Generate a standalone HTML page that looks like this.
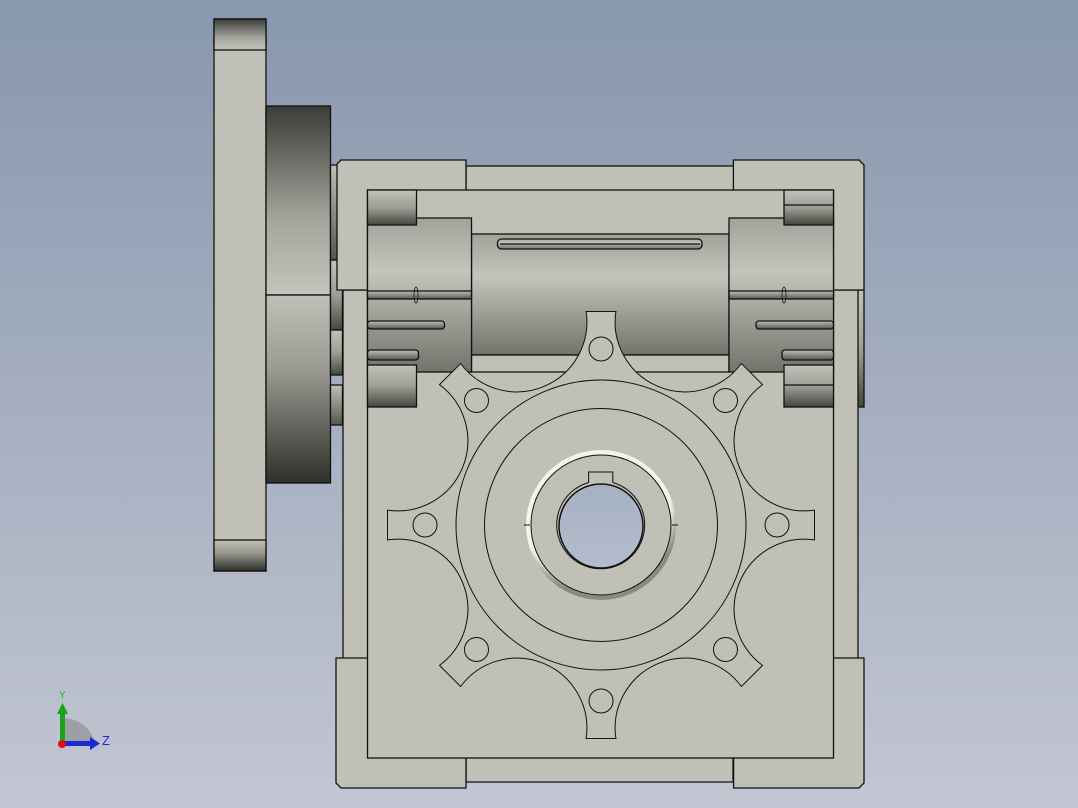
<!DOCTYPE html>
<html><head><meta charset="utf-8"><style>
html,body{margin:0;padding:0;width:1078px;height:808px;overflow:hidden}
svg{display:block}
</style></head><body>
<svg width="1078" height="808" viewBox="0 0 1078 808" xmlns="http://www.w3.org/2000/svg">
<defs>
<linearGradient id="bg" x1="0" y1="0" x2="0" y2="1"><stop offset="0" stop-color="#8797ad"/><stop offset="1" stop-color="#c3c6d3"/></linearGradient>
<linearGradient id="dDown" x1="0" y1="0" x2="0" y2="1"><stop offset="0" stop-color="#c0c0b8"/><stop offset="0.4" stop-color="#9a9a92"/><stop offset="1" stop-color="#2e2f2a"/></linearGradient>
<linearGradient id="dUp" x1="0" y1="0" x2="0" y2="1"><stop offset="0" stop-color="#3c3d38"/><stop offset="0.6" stop-color="#a5a59d"/><stop offset="1" stop-color="#c4c4bc"/></linearGradient>
<linearGradient id="cyl" x1="0" y1="0" x2="0" y2="1"><stop offset="0" stop-color="#a2a29a"/><stop offset="0.35" stop-color="#c4c4bc"/><stop offset="1" stop-color="#72736b"/></linearGradient>
<linearGradient id="blk" x1="0" y1="0" x2="0" y2="1"><stop offset="0" stop-color="#c2c2ba"/><stop offset="0.5" stop-color="#9e9e96"/><stop offset="1" stop-color="#45463f"/></linearGradient>
<linearGradient id="stub" x1="0" y1="0" x2="0" y2="1"><stop offset="0" stop-color="#c0c0b8"/><stop offset="1" stop-color="#55564f"/></linearGradient>
<radialGradient id="ring" cx="0.45" cy="0.35" r="0.6"><stop offset="0.85" stop-color="#f4f4ee"/><stop offset="1" stop-color="#8a8a82"/></radialGradient>
<linearGradient id="hole" x1="0" y1="0" x2="0" y2="1"><stop offset="0" stop-color="#a6b1c4"/><stop offset="1" stop-color="#b3bccb"/></linearGradient>
</defs>
<rect width="1078" height="808" fill="url(#bg)"/>
<g stroke="#111" stroke-width="1.3" fill="#c0c0b7">
<rect x="214" y="19" width="52" height="552"/>
<rect x="214" y="19" width="52" height="31" fill="url(#dUp)"/>
<rect x="214" y="540" width="52" height="31" fill="url(#dDown)"/>
<rect x="266" y="106" width="64.5" height="189" fill="url(#dUp)"/>
<rect x="266" y="295" width="64.5" height="188" fill="url(#dDown)"/>
<rect x="330.5" y="165" width="12" height="95" fill="url(#stub)"/>
<rect x="330.5" y="260" width="12" height="70" fill="url(#blk)"/>
<rect x="330.5" y="330" width="12" height="45" fill="url(#blk)"/>
<rect x="330.5" y="385" width="12" height="40" fill="url(#stub)"/>
<rect x="834" y="290" width="30" height="117" fill="url(#blk)"/>
<rect x="343" y="290" width="515" height="370"/>
<path d="M466 782 L733 782 L733 660 L466 660 Z"/>
<path d="M336 658 L466 658 L466 788 L341 788 L336 783 Z"/>
<path d="M864 658 L733.6 658 L733.6 788 L859 788 L864 783 Z"/>
<rect x="466" y="166" width="268" height="40"/>
<path d="M341 160 L466 160 L466 290 L337 290 L337 164 Z"/>
<path d="M733.4 160 L859 160 L864 165 L864 290 L733.4 290 Z"/>
<rect x="367.5" y="190" width="466" height="568"/>
<rect x="471.5" y="234" width="257.5" height="121" fill="url(#cyl)"/>
<rect x="471.5" y="355" width="257.5" height="17" fill="#c0c0b7"/>
<rect x="497.5" y="239" width="204.5" height="10" rx="4" fill="url(#cyl)"/>
<line x1="500" y1="244" x2="700" y2="244"/>
<rect x="367.5" y="218" width="104" height="154" fill="url(#cyl)"/>
<rect x="729" y="218" width="104.5" height="154" fill="url(#cyl)"/>
<rect x="367.5" y="291" width="104" height="8" fill="url(#stub)"/>
<rect x="729" y="291" width="104.5" height="8" fill="url(#stub)"/>
<rect x="367.5" y="321" width="77" height="8" rx="3" fill="url(#stub)"/>
<rect x="756" y="321" width="77.5" height="8" rx="3" fill="url(#stub)"/>
<rect x="367.5" y="350" width="51" height="10" rx="3" fill="url(#stub)"/>
<rect x="782" y="350" width="51.5" height="10" rx="3" fill="url(#stub)"/>
<ellipse cx="416" cy="295" rx="2" ry="8" fill="none" stroke-width="0.8"/>
<ellipse cx="784" cy="295" rx="2" ry="8" fill="none" stroke-width="0.8"/>
<rect x="367.5" y="190" width="49" height="35" fill="url(#blk)"/>
<rect x="784" y="190" width="49.5" height="35" fill="url(#blk)"/>
<line x1="784" y1="205" x2="833.5" y2="205"/>
<rect x="367.5" y="365" width="49" height="42" fill="url(#blk)"/>
<rect x="784" y="365" width="49.5" height="42" fill="url(#blk)"/>
<line x1="784" y1="385" x2="833.5" y2="385"/>
</g>
<g stroke="#111" stroke-width="1" fill="#c0c0b7">
<path d="M814.5 510.1 L814.5 539.9 A70 70 0 0 0 762.5 665.4 L741.4 686.5 A70 70 0 0 0 615.9 738.5 L586.1 738.5 A70 70 0 0 0 460.6 686.5 L439.5 665.4 A70 70 0 0 0 387.5 539.9 L387.5 510.1 A70 70 0 0 0 439.5 384.6 L460.6 363.5 A70 70 0 0 0 586.1 311.5 L615.9 311.5 A70 70 0 0 0 741.4 363.5 L762.5 384.6 A70 70 0 0 0 814.5 510.1 Z"/>
<g fill="none">
<circle cx="777" cy="525" r="12"/><circle cx="725.5" cy="649.5" r="12"/><circle cx="601" cy="701" r="12"/><circle cx="476.5" cy="649.5" r="12"/>
<circle cx="425" cy="525" r="12"/><circle cx="476.5" cy="400.5" r="12"/><circle cx="601" cy="349" r="12"/><circle cx="725.5" cy="400.5" r="12"/>
<circle cx="601" cy="525" r="145"/>
<circle cx="601" cy="525" r="116.5"/>
</g>
<circle cx="601" cy="525" r="75" fill="url(#ring)" stroke="none"/>
<circle cx="601" cy="525" r="70" fill="#c0c0b7"/>
<line x1="524" y1="525" x2="530" y2="525"/><line x1="672" y1="525" x2="678" y2="525"/>
<path d="M588.6 482.5 L588.6 472 L612.8 472 L612.8 482.5 A44 44 0 1 1 588.6 482.5 Z" fill="#c0c0b7"/>
<circle cx="601" cy="526" r="42" fill="url(#hole)" stroke-width="1.5"/>
</g>
<path d="M62 743 L62 718 A33 33 0 0 1 95 743 Z" fill="#9d9fa6"/>
<rect x="60" y="712" width="5" height="32" fill="#1aa31a"/>
<path d="M57 714 L62.5 703 L68 714 Z" fill="#1aa31a"/>
<rect x="62" y="741" width="30" height="5" fill="#1a2ad0"/>
<path d="M90 737 L100 743.5 L90 750 Z" fill="#1a2ad0"/>
<circle cx="62" cy="744" r="4" fill="#e01010"/>
<text x="59" y="698" font-family="Liberation Sans, sans-serif" font-size="10" fill="#10c010">Y</text>
<text x="102" y="745" font-family="Liberation Sans, sans-serif" font-size="13" fill="#1a2ad0">Z</text>
</svg>
</body></html>
